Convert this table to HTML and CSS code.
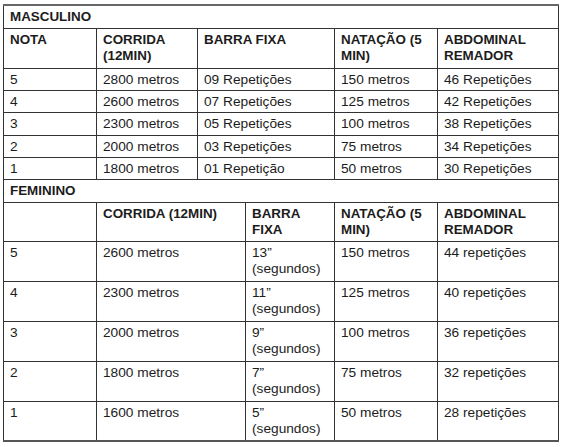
FILE: index.html
```html
<!DOCTYPE html>
<html lang="pt">
<head>
<meta charset="utf-8">
<title>Tabela</title>
<link rel="stylesheet" href="styles.css">
</head>
<body>
<table class="tab">
  <colgroup>
    <col class="c1"><col class="c2"><col class="c3"><col class="c4"><col class="c5"><col class="c6">
  </colgroup>
  <tr class="r-sec"><th colspan="6" class="sec">MASCULINO</th></tr>
  <tr class="r-head">
    <th>NOTA</th>
    <th>CORRIDA<br>(12MIN)</th>
    <th colspan="2">BARRA FIXA</th>
    <th>NATAÇÃO (5<br>MIN)</th>
    <th>ABDOMINAL<br>REMADOR</th>
  </tr>
  <tr class="r-m"><td>5</td><td>2800 metros</td><td colspan="2">09 Repetições</td><td>150 metros</td><td>46 Repetições</td></tr>
  <tr class="r-m"><td>4</td><td>2600 metros</td><td colspan="2">07 Repetições</td><td>125 metros</td><td>42 Repetições</td></tr>
  <tr class="r-m"><td>3</td><td>2300 metros</td><td colspan="2">05 Repetições</td><td>100 metros</td><td>38 Repetições</td></tr>
  <tr class="r-m"><td>2</td><td>2000 metros</td><td colspan="2">03 Repetições</td><td>75 metros</td><td>34 Repetições</td></tr>
  <tr class="r-m"><td>1</td><td>1800 metros</td><td colspan="2">01 Repetição</td><td>50 metros</td><td>30 Repetições</td></tr>
  <tr class="r-sec"><th colspan="6" class="sec">FEMININO</th></tr>
  <tr class="r-head r-fhead">
    <th></th>
    <th colspan="2">CORRIDA (12MIN)</th>
    <th>BARRA<br>FIXA</th>
    <th>NATAÇÃO (5<br>MIN)</th>
    <th>ABDOMINAL<br>REMADOR</th>
  </tr>
  <tr class="r-f"><td>5</td><td colspan="2">2600 metros</td><td>13”<br>(segundos)</td><td>150 metros</td><td>44 repetições</td></tr>
  <tr class="r-f"><td>4</td><td colspan="2">2300 metros</td><td>11”<br>(segundos)</td><td>125 metros</td><td>40 repetições</td></tr>
  <tr class="r-f"><td>3</td><td colspan="2">2000 metros</td><td>9”<br>(segundos)</td><td>100 metros</td><td>36 repetições</td></tr>
  <tr class="r-f"><td>2</td><td colspan="2">1800 metros</td><td>7”<br>(segundos)</td><td>75 metros</td><td>32 repetições</td></tr>
  <tr class="r-f"><td>1</td><td colspan="2">1600 metros</td><td>5”<br>(segundos)</td><td>50 metros</td><td>28 repetições</td></tr>
</table>
</body>
</html>
```

FILE: styles.css
```css
html, body {
  margin: 0;
  padding: 0;
  background: #ffffff;
}
body {
  padding: 4px 0 0 3px;
  font-family: "Liberation Sans", Arial, sans-serif;
  color: #1c1c1c;
}
.tab {
  border-collapse: collapse;
  table-layout: fixed;
  width: 556px;
  font-size: 13.7px;
  line-height: 16px;
  border-top: 2px solid #666666;
  border-bottom: 2px solid #555555;
}
.c1 { width: 93px; }
.c2 { width: 101px; }
.c3 { width: 48px; }
.c4 { width: 89px; }
.c5 { width: 103px; }
.c6 { width: 121px; }
.tab th, .tab td {
  border: 1px solid #333333;
  padding: 3px 5px 0 6px;
  vertical-align: top;
  text-align: left;
  white-space: nowrap;
  overflow: hidden;
}
.tab th {
  font-weight: bold;
  font-size: 13.4px;
}
.r-sec { height: 23px; }
.r-head { height: 40px; }
.r-fhead { height: 39px; }
.r-m { height: 22.4px; }
.r-f { height: 39.8px; }
```
